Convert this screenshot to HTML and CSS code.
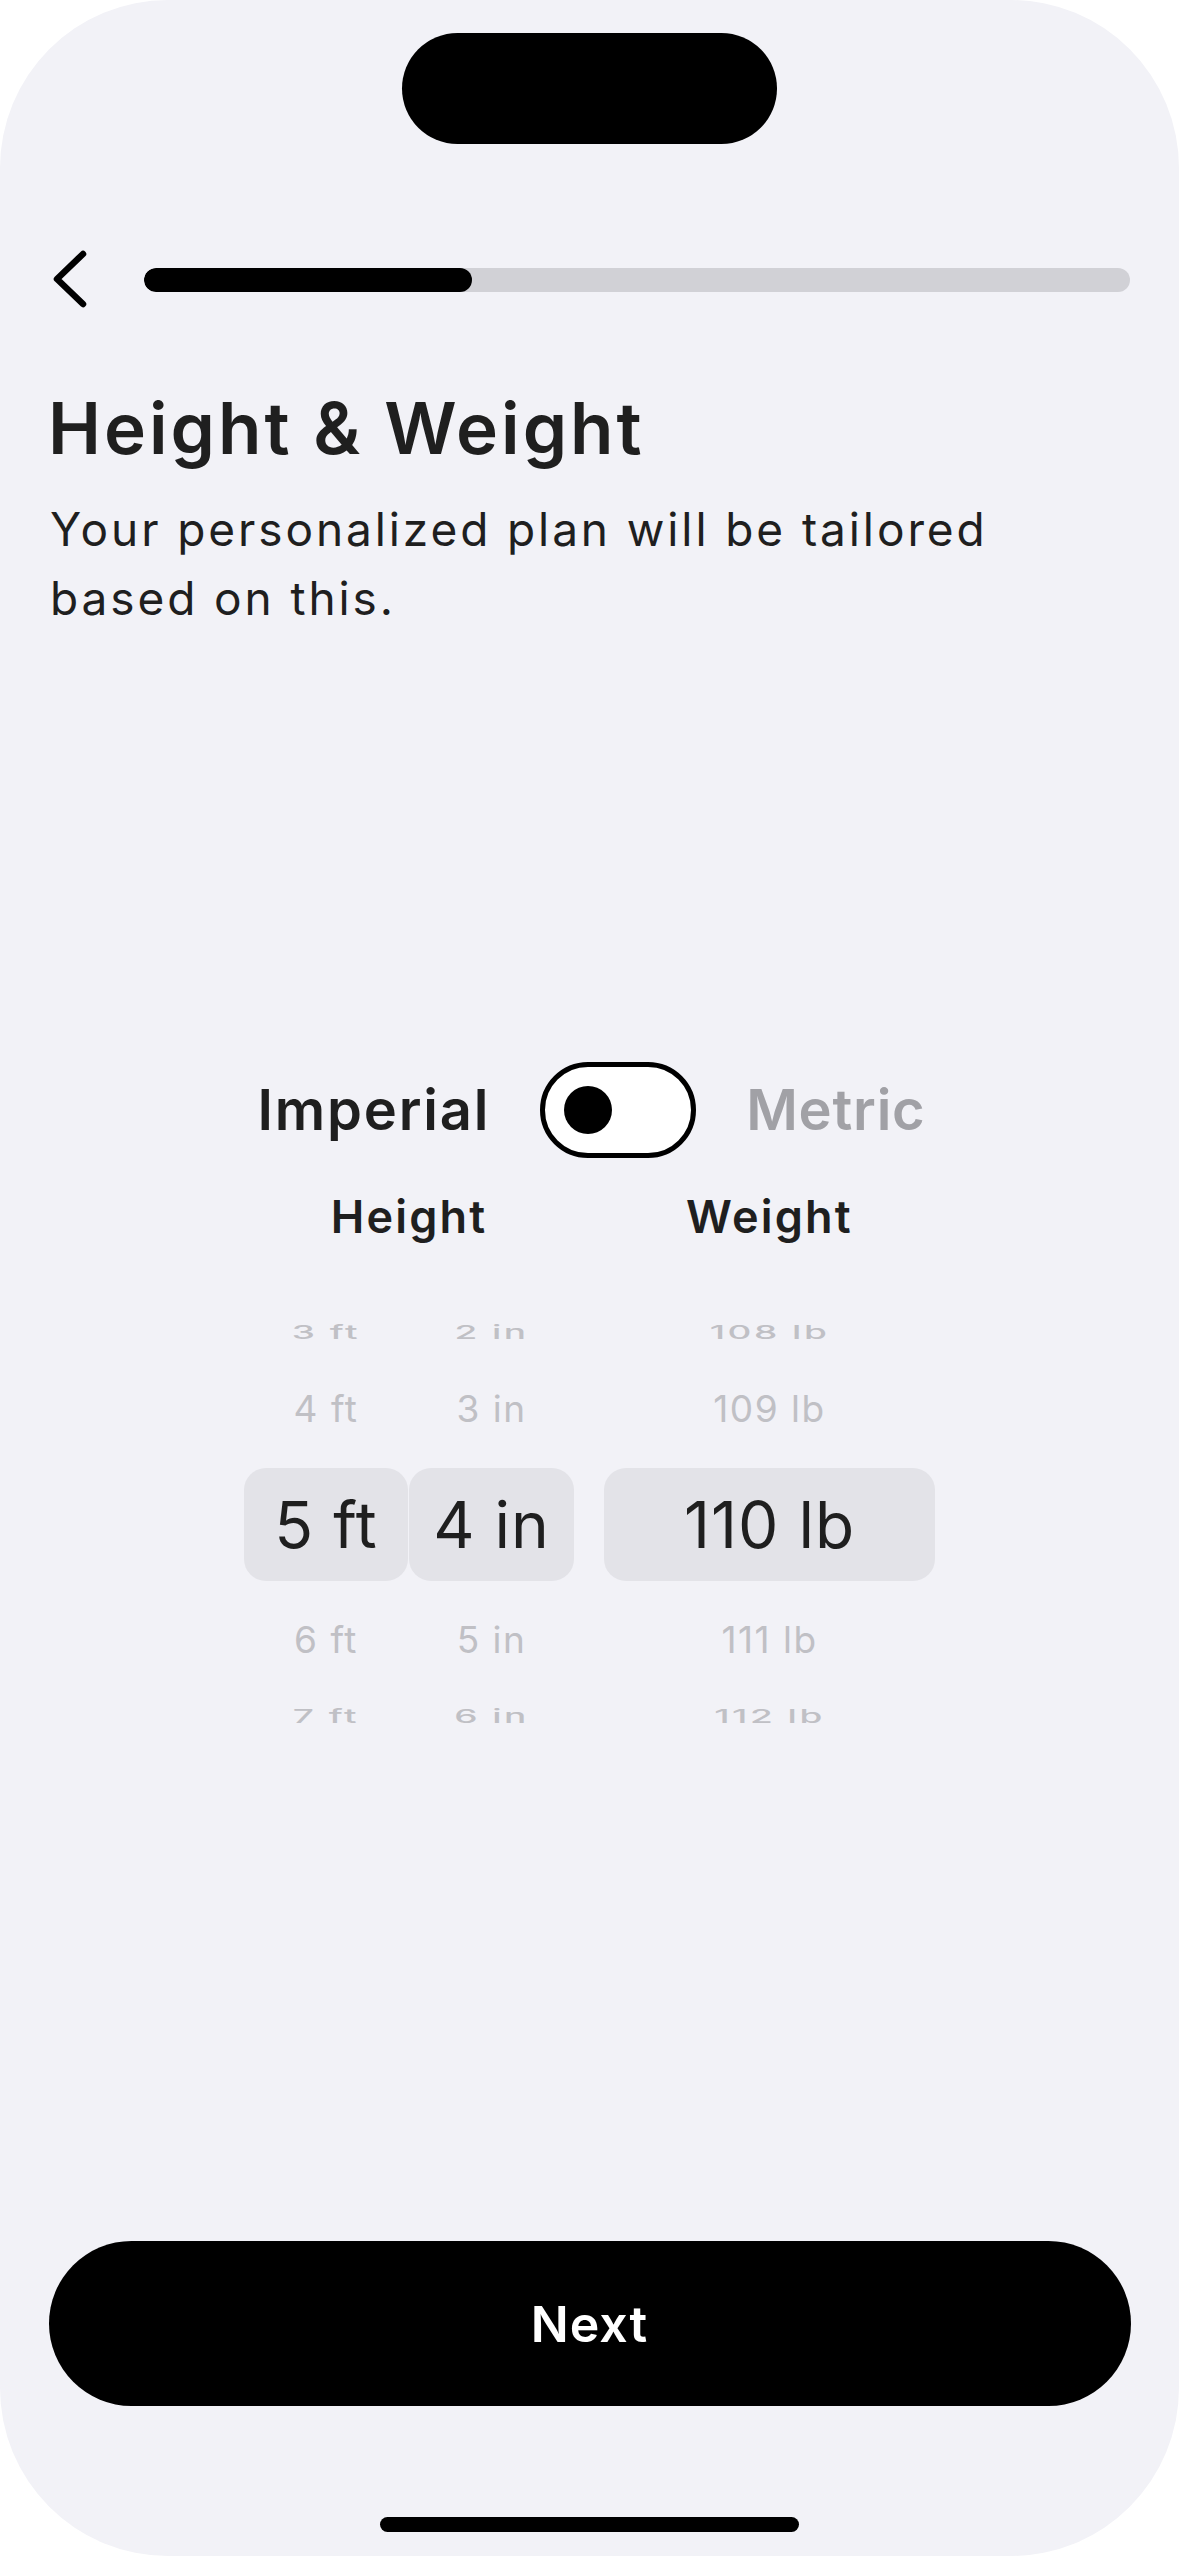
FILE: index.html
```html
<!DOCTYPE html>
<html lang="en">
<head>
<meta charset="utf-8">
<title>Height &amp; Weight</title>
<link rel="stylesheet" href="styles.css">
</head>
<body>
<div class="screen">
  <div class="island"></div>

  <div class="topbar">
    <button class="back" aria-label="Back">
      <svg width="36" height="60" viewBox="0 0 36 60" fill="none">
        <path d="M31 4 L5 29 L31 54" stroke="#000" stroke-width="6.5" stroke-linecap="round" stroke-linejoin="round"/>
      </svg>
    </button>
    <div class="progress"><div class="progress-fill" style="width: 33.3%"></div></div>
  </div>

  <h1 class="title">Height &amp; Weight</h1>
  <p class="subtitle">Your personalized plan will be tailored based on this.</p>

  <div class="units">
    <span class="unit unit-active">Imperial</span>
    <div class="switch"><div class="knob"></div></div>
    <span class="unit unit-inactive">Metric</span>
  </div>

  <div class="pick-heads">
    <div class="head">Height</div>
    <div class="head">Weight</div>
  </div>

  <div class="pickers">
    <div class="pair">
      <div class="wheel w-ft">
        <div class="row far top"><span>2 ft</span></div>
        <div class="row near"><span>3 ft</span></div>
        <div class="row mid1"><span>4 ft</span></div>
        <div class="row sel"><span>5 ft</span></div>
        <div class="row mid2"><span>6 ft</span></div>
        <div class="row near2"><span>7 ft</span></div>
        <div class="row far bottom"><span>8 ft</span></div>
      </div>
      <div class="wheel w-in">
        <div class="row far top"><span>1 in</span></div>
        <div class="row near"><span>2 in</span></div>
        <div class="row mid1"><span>3 in</span></div>
        <div class="row sel"><span>4 in</span></div>
        <div class="row mid2"><span>5 in</span></div>
        <div class="row near2"><span>6 in</span></div>
        <div class="row far bottom"><span>7 in</span></div>
      </div>
    </div>
    <div class="wheel w-lb">
      <div class="row far top"><span>107 lb</span></div>
      <div class="row near"><span>108 lb</span></div>
      <div class="row mid1"><span>109 lb</span></div>
      <div class="row sel"><span>110 lb</span></div>
      <div class="row mid2"><span>111 lb</span></div>
      <div class="row near2"><span>112 lb</span></div>
      <div class="row far bottom"><span>113 lb</span></div>
    </div>
  </div>

  <div class="spacer"></div>

  <button class="next">Next</button>
  <div class="home-indicator"></div>
</div>
</body>
</html>
```

FILE: styles.css
```css
* { box-sizing: border-box; }

html, body {
  margin: 0;
  padding: 0;
  background: #ffffff;
}

body {
  font-family: "Inter", "Noto Sans", "Liberation Sans", sans-serif;
  color: #1f1f1f;
}

.screen {
  position: relative;
  width: 1179px;
  height: 2556px;
  background: #f2f2f7;
  border-radius: 168px;
  overflow: hidden;
  display: flex;
  flex-direction: column;
  padding-top: 250px;
}

.island {
  position: absolute;
  top: 33px;
  left: 402px;
  width: 375px;
  height: 111px;
  border-radius: 56px;
  background: #000;
}

.topbar {
  display: flex;
  align-items: center;
  height: 60px;
  padding-left: 52px;
  padding-right: 49px;
}

.back {
  border: 0;
  background: none;
  padding: 0;
  width: 36px;
  height: 60px;
  display: flex;
}

.progress {
  flex: 1;
  margin-left: 56px;
  height: 24px;
  border-radius: 12px;
  background: #d1d1d6;
  overflow: hidden;
}

.progress-fill {
  height: 100%;
  background: #000;
  border-radius: 12px;
}

.title {
  margin: 75px 0 0 48px;
  font-size: 71px;
  font-weight: 600;
  line-height: 86px;
  letter-spacing: 3px;
  color: #1f1f1f;
}

.subtitle {
  margin: 24px 0 0 50px;
  width: 980px;
  font-size: 46px;
  font-weight: 400;
  line-height: 69px;
  letter-spacing: 2.9px;
  color: #1f1f1f;
}

.units {
  margin-top: 429px;
  display: flex;
  justify-content: center;
  align-items: center;
  gap: 50px;
  height: 96px;
  padding-left: 4px;
}

.unit {
  font-size: 56px;
  font-weight: 600;
  line-height: 1;
}

.unit-active { color: #1f1f1f; letter-spacing: 1.8px; }
.unit-inactive { color: #a1a1a6; letter-spacing: 0.8px; }

.switch {
  width: 156px;
  height: 96px;
  border: 5px solid #000;
  border-radius: 48px;
  background: #fff;
  display: flex;
  align-items: center;
  padding-left: 19px;
}

.knob {
  width: 48px;
  height: 48px;
  border-radius: 50%;
  background: #000;
}

.pick-heads {
  margin-top: 29px;
  display: grid;
  grid-template-columns: 330px 331px;
  column-gap: 30px;
  justify-content: center;
  text-align: center;
}

.head {
  font-size: 45px;
  font-weight: 600;
  line-height: 60px;
  letter-spacing: 2.2px;
  color: #1f1f1f;
}

.pickers {
  margin-top: 55px;
  display: flex;
  justify-content: center;
  gap: 30px;
}

.pair {
  display: flex;
  gap: 1px;
}

.wheel {
  display: flex;
  flex-direction: column;
  overflow: hidden;
}

.w-ft { width: 164px; }
.w-in { width: 165px; }
.w-lb { width: 331px; }

.row {
  display: flex;
  align-items: center;
  justify-content: center;
  overflow: hidden;
  color: #c0c0c5;
  font-size: 37px;
  font-weight: 400;
  letter-spacing: 1.5px;
  white-space: nowrap;
}

.row span { display: block; line-height: 1; }

.far { height: 14px; }
.far.top { align-items: flex-end; }
.far.bottom { align-items: flex-start; }
.far span { transform: scaleY(0.25); letter-spacing: 3px; font-weight: 500; }

.near { height: 32px; }
.near2 { height: 38px; }
.near span, .near2 span { transform: scaleY(0.5); letter-spacing: 2.5px; font-weight: 500; }

.mid1 { height: 120px; }
.mid2 { height: 116px; }

.sel {
  height: 113px;
  border-radius: 22px;
  background: #e3e3e8;
  color: #1f1f1f;
  font-size: 64px;
  letter-spacing: 1px;
}

.spacer { flex: 1; }

.next {
  align-self: center;
  width: 1082px;
  height: 165px;
  border: 0;
  border-radius: 83px;
  background: #000;
  color: #fff;
  font-family: inherit;
  font-size: 50px;
  font-weight: 600;
  letter-spacing: 1px;
}

.home-indicator {
  align-self: center;
  margin: 111px 0 24px;
  width: 419px;
  height: 15px;
  border-radius: 8px;
  background: #000;
}
```
